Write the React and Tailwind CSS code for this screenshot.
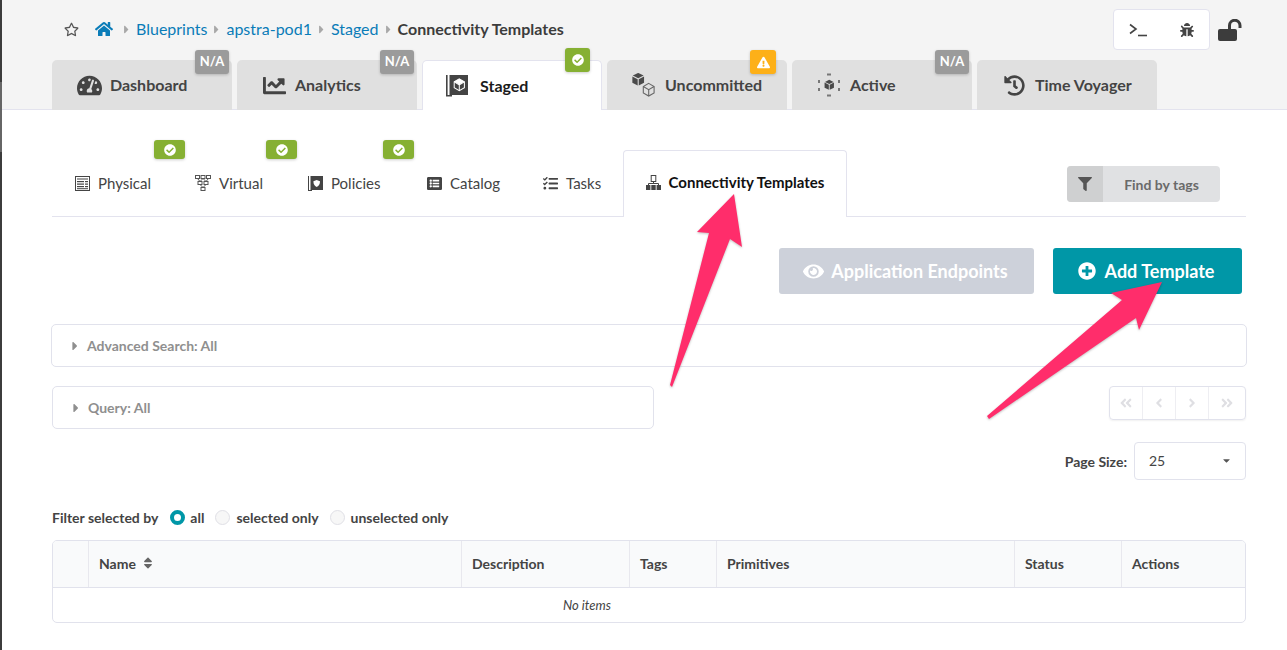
import {
  FaRegStar, FaHome, FaTachometerAlt, FaChartLine, FaBug, FaHistory,
  FaFilter, FaEye, FaPlusCircle, FaListAlt, FaTasks, FaCheckCircle,
  FaExclamationTriangle, FaCaretRight, FaCaretDown, FaSort, FaAngleDoubleLeft,
  FaAngleLeft, FaAngleRight, FaAngleDoubleRight,
} from 'react-icons/fa'

const Cube = ({ x = 0, y = 0, s = 1, outline = false, color = '#4a4a4a' }) => (
  <g transform={`translate(${x} ${y}) scale(${s})`}>
    {outline ? (
      <g fill="none" stroke={color} strokeWidth="1.2">
        <path d="M8 1 14 4.5V11.5L8 15 2 11.5V4.5Z" />
        <path d="M2 4.5 8 8 14 4.5M8 8V15" />
      </g>
    ) : (
      <g fill={color}>
        <path d="M8 1 14 4 8 7 2 4Z" />
        <path d="M1.5 5 7.4 8V15L1.5 12Z" />
        <path d="M14.5 5 8.6 8V15L14.5 12Z" />
      </g>
    )}
  </g>
)

const StagedIcon = () => (
  <svg width="22" height="22" viewBox="0 0 22 22">
    <path d="M0 0H1.6V20H6V21.5H0Z" fill="#444" />
    <rect x="3.5" y="0" width="18.5" height="20" fill="#444" />
    <Cube x={6.5} y={3} s={0.85} outline color="#fff" />
    <path d="M13.3 3.8 18.4 6.8 13.3 9.6 8.1 6.8Z" fill="#fff" />
  </svg>
)

const UncommittedIcon = () => (
  <svg width="24" height="24" viewBox="0 0 24 24">
    <Cube x={-1} y={-1} s={0.9} />
    <Cube x={9.5} y={9.5} s={0.9} outline color="#666" />
  </svg>
)

const ActiveIcon = () => (
  <svg width="24" height="24" viewBox="0 0 24 24">
    <Cube x={6.5} y={6} s={0.72} />
    <g fill="#777">
      <rect x="10" y="0.5" width="4" height="2" />
      <rect x="10" y="21.5" width="4" height="2" />
      <rect x="1" y="7" width="2" height="3" />
      <rect x="21" y="7" width="2" height="3" />
      <rect x="1" y="15" width="2" height="3" />
      <rect x="21" y="15" width="2" height="3" />
    </g>
  </svg>
)

const PhysicalIcon = () => (
  <svg width="15" height="15" viewBox="0 0 15 15">
    <rect x="0.5" y="0.5" width="14" height="14" fill="none" stroke="#444" />
    <g fill="#444">
      <rect x="2" y="2.5" width="11" height="1" />
      <rect x="2" y="5" width="7" height="1.2" />
      <rect x="10" y="5" width="3" height="1.2" />
      <rect x="2" y="7.5" width="7" height="1.2" />
      <rect x="10" y="7.5" width="3" height="1.2" />
      <rect x="2" y="10" width="7" height="1.2" />
      <rect x="10" y="10" width="3" height="1.2" />
      <rect x="2" y="12.2" width="11" height="1" />
    </g>
  </svg>
)

const VirtualIcon = () => (
  <svg width="16" height="16" viewBox="0 0 16 16">
    <g fill="none" stroke="#555" strokeWidth="1">
      <rect x="0.5" y="0.5" width="4" height="3" />
      <rect x="6" y="0.5" width="4" height="3" />
      <rect x="11.5" y="0.5" width="4" height="3" />
      <rect x="3" y="6.5" width="4" height="3" />
      <rect x="9" y="6.5" width="4" height="3" />
      <rect x="6" y="12.5" width="4" height="3" />
      <path d="M2.5 3.5 5 6.5M8 3.5 5 6.5M8 3.5 11 6.5M13.5 3.5 11 6.5M5 9.5 8 12.5M11 9.5 8 12.5" />
    </g>
  </svg>
)

const PoliciesIcon = () => (
  <svg width="15" height="15" viewBox="0 0 15 15">
    <path d="M0 0H1V14H4V15H0Z" fill="#444" />
    <rect x="2.5" y="0" width="12.5" height="14" fill="#444" />
    <path d="M8.7 4 12 5.2C12 8 11 10 8.7 11 6.4 10 5.4 8 5.4 5.2Z" fill="#fff" />
  </svg>
)

const ConnectivityIcon = () => (
  <svg width="15" height="15" viewBox="0 0 15 15">
    <rect x="5.2" y="0.5" width="4.6" height="6" fill="none" stroke="#444" />
    <path d="M7.5 6.5V8.5M2.5 10.5V8.5H12.5V10.5" fill="none" stroke="#444" />
    <g fill="#444">
      <rect x="0" y="10" width="4.4" height="5" />
      <rect x="5.3" y="10" width="4.4" height="5" />
      <rect x="10.6" y="10" width="4.4" height="5" />
    </g>
  </svg>
)

const UnlockIcon = () => (
  <svg width="24" height="22" viewBox="0 0 24 22">
    <rect x="0" y="10" width="19" height="12" rx="2" fill="#3c3c3c" />
    <path d="M11.5 11V6.5a5 5 0 0 1 10.5 0V9" fill="none" stroke="#3c3c3c" strokeWidth="3" />
  </svg>
)

const Badge = ({ type, className }) => {
  if (type === 'na') {
    return <div className={`absolute flex h-[24px] w-[34px] items-center justify-center rounded-[3px] bg-[#9b9b9b] text-[13px] font-bold text-white shadow-[0_1px_3px_rgba(0,0,0,0.2)] ${className}`}>N/A</div>
  }
  if (type === 'warn') {
    return <div className={`absolute flex h-[24px] w-[26px] items-center justify-center rounded-[3px] bg-[#fdb018] text-white shadow-[0_1px_3px_rgba(0,0,0,0.2)] ${className}`}><FaExclamationTriangle size={13} /></div>
  }
  return <div className={`absolute flex h-[24px] w-[25px] items-center justify-center rounded-[3px] bg-[#86b033] text-white shadow-[0_1px_3px_rgba(0,0,0,0.2)] ${className}`}><FaCheckCircle size={12} /></div>
}

const Crumb = ({ children }) => <a className="text-[16px] text-[#0a7cb8]">{children}</a>
const Sep = () => <FaCaretRight size={13} className="mx-[3px] text-[#a8a8a8]" />

const mainTabs = [
  { label: 'Dashboard', icon: <FaTachometerAlt size={25} />, badge: 'na' },
  { label: 'Analytics', icon: <FaChartLine size={23} />, badge: 'na' },
  { label: 'Staged', icon: <StagedIcon />, badge: 'ok', active: true },
  { label: 'Uncommitted', icon: <UncommittedIcon />, badge: 'warn' },
  { label: 'Active', icon: <ActiveIcon />, badge: 'na' },
  { label: 'Time Voyager', icon: <FaHistory size={21} /> },
]

const MainTab = ({ tab }) => (
  <div className={`relative flex h-[50px] w-[180px] items-center gap-[8px] rounded-t-[5px] text-[16px] font-bold ${tab.active ? 'mb-[-1px] border border-b-0 border-[#e3e3ee] bg-white pl-[23px] text-[#1b1b1b]' : 'bg-[#e0e0e0] pl-[24px] text-[#444]'}`}>
    <span className={`flex w-[26px] text-[#444] ${tab.active ? 'justify-start' : 'justify-center'}`}>{tab.icon}</span>
    <span>{tab.label}</span>
    {tab.badge === 'na' && <Badge type="na" className="right-[3px] top-[-10px]" />}
    {tab.badge === 'ok' && <Badge type="ok" className="right-[11px] top-[-13px]" />}
    {tab.badge === 'warn' && <Badge type="warn" className="right-[11px] top-[-10px]" />}
  </div>
)

const subTabs = [
  { label: 'Physical', icon: <PhysicalIcon />, width: 'w-[121px] pl-[22px]', badge: 'left-[102px]' },
  { label: 'Virtual', icon: <VirtualIcon />, width: 'w-[112px] pl-[22px]', badge: 'left-[93px]' },
  { label: 'Policies', icon: <PoliciesIcon />, width: 'w-[119px] pl-[22px]', badge: 'left-[98px]' },
  { label: 'Catalog', icon: <FaListAlt size={15} />, width: 'w-[117px] pl-[22px]' },
  { label: 'Tasks', icon: <FaTasks size={15} />, width: 'w-[80px] pl-[22px]' },
]

const Collapsed = ({ label, className }) => (
  <div className={`flex h-[43px] items-center rounded-[5px] border border-[#e1e2ec] pl-[16px] text-[14px] font-bold text-[#8f8f8f] ${className}`}>
    <FaCaretRight size={14} className="mr-[5px]" />
    {label}
  </div>
)

const columns = [
  { label: '', width: 'w-[36px]' },
  { label: 'Name', width: 'w-[373px]', sort: true },
  { label: 'Description', width: 'w-[168px]' },
  { label: 'Tags', width: 'w-[87px]' },
  { label: 'Primitives', width: 'w-[298px]' },
  { label: 'Status', width: 'w-[107px]' },
  { label: 'Actions', width: 'flex-1' },
]

const Radio = ({ checked, label }) => (
  <label className={`flex items-center ${checked ? 'gap-[5px]' : 'gap-[6px]'}`}>
    {checked
      ? <span className="h-[15px] w-[15px] rounded-full border-[4px] border-[#0097a7] bg-white" />
      : <span className="h-[15px] w-[15px] rounded-full border border-[#e0e0e6] bg-[#f7f7f7]" />}
    <span>{label}</span>
  </label>
)

function App() {
  return (
    <div className="relative flex h-[650px] overflow-hidden bg-white font-['Lato','Liberation_Sans',sans-serif] text-[#444]">
      <div className="flex w-[2px] flex-col bg-[#3c3c3c]">
        <div className="mt-[82px] h-[70px] bg-[#666]" />
      </div>

      <div className="flex-1">
        <header className="h-[110px] border-b border-[#e3e3ee] bg-[#f4f4f4] pl-[50px]">
          <div className="flex h-[60px] items-start">
            <div className="flex items-center pl-[12px] pt-[17px]">
              <FaRegStar size={15} className="mr-[16px] text-[#555]" />
              <FaHome size={18} className="mr-[4px] text-[#0a7cb8]" />
              <Sep />
              <Crumb>Blueprints</Crumb>
              <Sep />
              <Crumb>apstra-pod1</Crumb>
              <Sep />
              <Crumb>Staged</Crumb>
              <Sep />
              <span className="text-[16px] font-bold text-[#3c3c3c]">Connectivity Templates</span>
            </div>
            <div className="ml-auto mr-[45px] mt-[9px] flex items-center gap-[8px]">
              <div className="flex h-[41px] w-[97px] items-center justify-between rounded-[4px] border border-[#e3e3ee] bg-white px-[15px]">
                <svg width="18" height="14" viewBox="0 0 18 14" fill="none" stroke="#444" strokeWidth="1.6"><path d="M1 1.5 7 6 1 10.5" /><path d="M9 12.5H18" /></svg>
                <FaBug size={14} />
              </div>
              <UnlockIcon />
            </div>
          </div>
          <div className="flex gap-[5px]">
            {mainTabs.map((tab) => <MainTab key={tab.label} tab={tab} />)}
          </div>
        </header>

        <main className="pl-[50px] pr-[41px]">
          <div className="relative mt-[40px] flex h-[67px] items-end border-b border-[#e3e3ee]">
            {subTabs.map((tab) => (
              <div key={tab.label} className={`relative flex h-[66px] items-center gap-[8px] text-[15px] ${tab.width}`}>
                <span className="flex w-[16px] justify-center text-[#444]">{tab.icon}</span>
                <span>{tab.label}</span>
                {tab.badge && <Badge type="ok" className={`top-[-10px] !w-[31px] !h-[19px] ${tab.badge}`} />}
              </div>
            ))}
            <div className="relative mb-[-1px] ml-[22px] flex h-[67px] w-[224px] items-center justify-center gap-[8px] rounded-t-[4px] border border-b-0 border-[#e3e3ee] bg-white pb-[3px] text-[15px] font-bold text-[#111]">
              <ConnectivityIcon />
              Connectivity Templates
            </div>
            <div className="mb-[14px] ml-auto mr-[26px] flex h-[36px] w-[153px] overflow-hidden rounded-[4px] bg-[#e0e1e3] text-[14px] font-bold text-[#6a6a6a]">
              <span className="flex w-[36px] items-center justify-center bg-[#cfd0d1]"><FaFilter size={14} className="text-[#555]" /></span>
              <span className="flex flex-1 items-center justify-center">Find by tags</span>
            </div>
          </div>

          <div className="mr-[4px] mt-[31px] flex justify-end gap-[19px] text-[18px] font-bold text-white">
            <button className="flex h-[46px] w-[255px] items-center justify-center gap-[7px] rounded-[3px] bg-[#cdd1da] pr-[2px]"><FaEye size={21} />Application Endpoints</button>
            <button className="flex h-[46px] w-[189px] items-center justify-center gap-[9px] rounded-[3px] bg-[#0097a7] pr-[3px]"><FaPlusCircle size={18} />Add Template</button>
          </div>

          <Collapsed label="Advanced Search: All" className="mx-[-1px] mt-[30px]" />

          <div className="mt-[19px] flex items-start justify-between">
            <Collapsed label="Query: All" className="w-[602px]" />
            <div className="flex h-[34px] w-[137px] rounded-[4px] border border-[#e1e2ec] text-[#dfdfe3] shadow-[0_1px_2px_rgba(0,0,0,0.06)]">
              <span className="flex w-[33px] items-center justify-center border-r border-[#eeeef2]"><FaAngleDoubleLeft size={14} /></span>
              <span className="flex w-[33px] items-center justify-center border-r border-[#eeeef2]"><FaAngleLeft size={14} /></span>
              <span className="flex w-[33px] items-center justify-center border-r border-[#eeeef2]"><FaAngleRight size={14} /></span>
              <span className="flex flex-1 items-center justify-center"><FaAngleDoubleRight size={14} /></span>
            </div>
          </div>

          <div className="mt-[13px] flex items-center justify-end gap-[7px]">
            <span className="text-[14px] font-bold">Page Size:</span>
            <div className="flex h-[38px] w-[112px] items-center justify-between rounded-[4px] border border-[#e1e2ec] pb-[1px] pl-[14px] pr-[13px] text-[14px]">
              25
              <FaCaretDown size={11} className="text-[#555]" />
            </div>
          </div>

          <div className="mt-[28px] flex h-[18px] items-center text-[14px] font-bold">
            <span className="mr-[12px]">Filter selected by</span>
            <div className="flex gap-[11px]">
              <Radio checked label="all" />
              <Radio label="selected only" />
              <Radio label="unselected only" />
            </div>
          </div>

          <div className="mt-[14px] overflow-hidden rounded-[5px] border border-[#e1e2ec] text-[14px]">
            <div className="flex h-[47px] border-b border-[#e1e2ec] bg-[#f9fafb] font-bold">
              {columns.map((col, i) => (
                <div key={i} className={`flex items-center gap-[5px] px-[10px] pb-[2px] ${col.width} ${i < columns.length - 1 ? 'border-r border-[#e8e8ee]' : ''}`}>
                  {col.label}
                  {col.sort && <FaSort size={14} className="text-[#666]" />}
                </div>
              ))}
            </div>
            <div className="flex h-[34px] items-center justify-center pr-[124px] pt-[2px] text-[13px] italic">No items</div>
          </div>
        </main>
      </div>

      <svg className="pointer-events-none absolute left-0 top-0 drop-shadow-[0_1px_1px_rgba(0,0,0,0.25)]" width="1287" height="650" viewBox="0 0 1287 650">
        <path d="M734 194 742 247 730 239 672 387 670 385 709 233 697 232Z" fill="#ff2d6b" />
        <path d="M1162 282 1139 330 1136 318 989 419 987 416 1122 300 1111 293Z" fill="#ff2d6b" />
      </svg>
    </div>
  )
}

export default App
